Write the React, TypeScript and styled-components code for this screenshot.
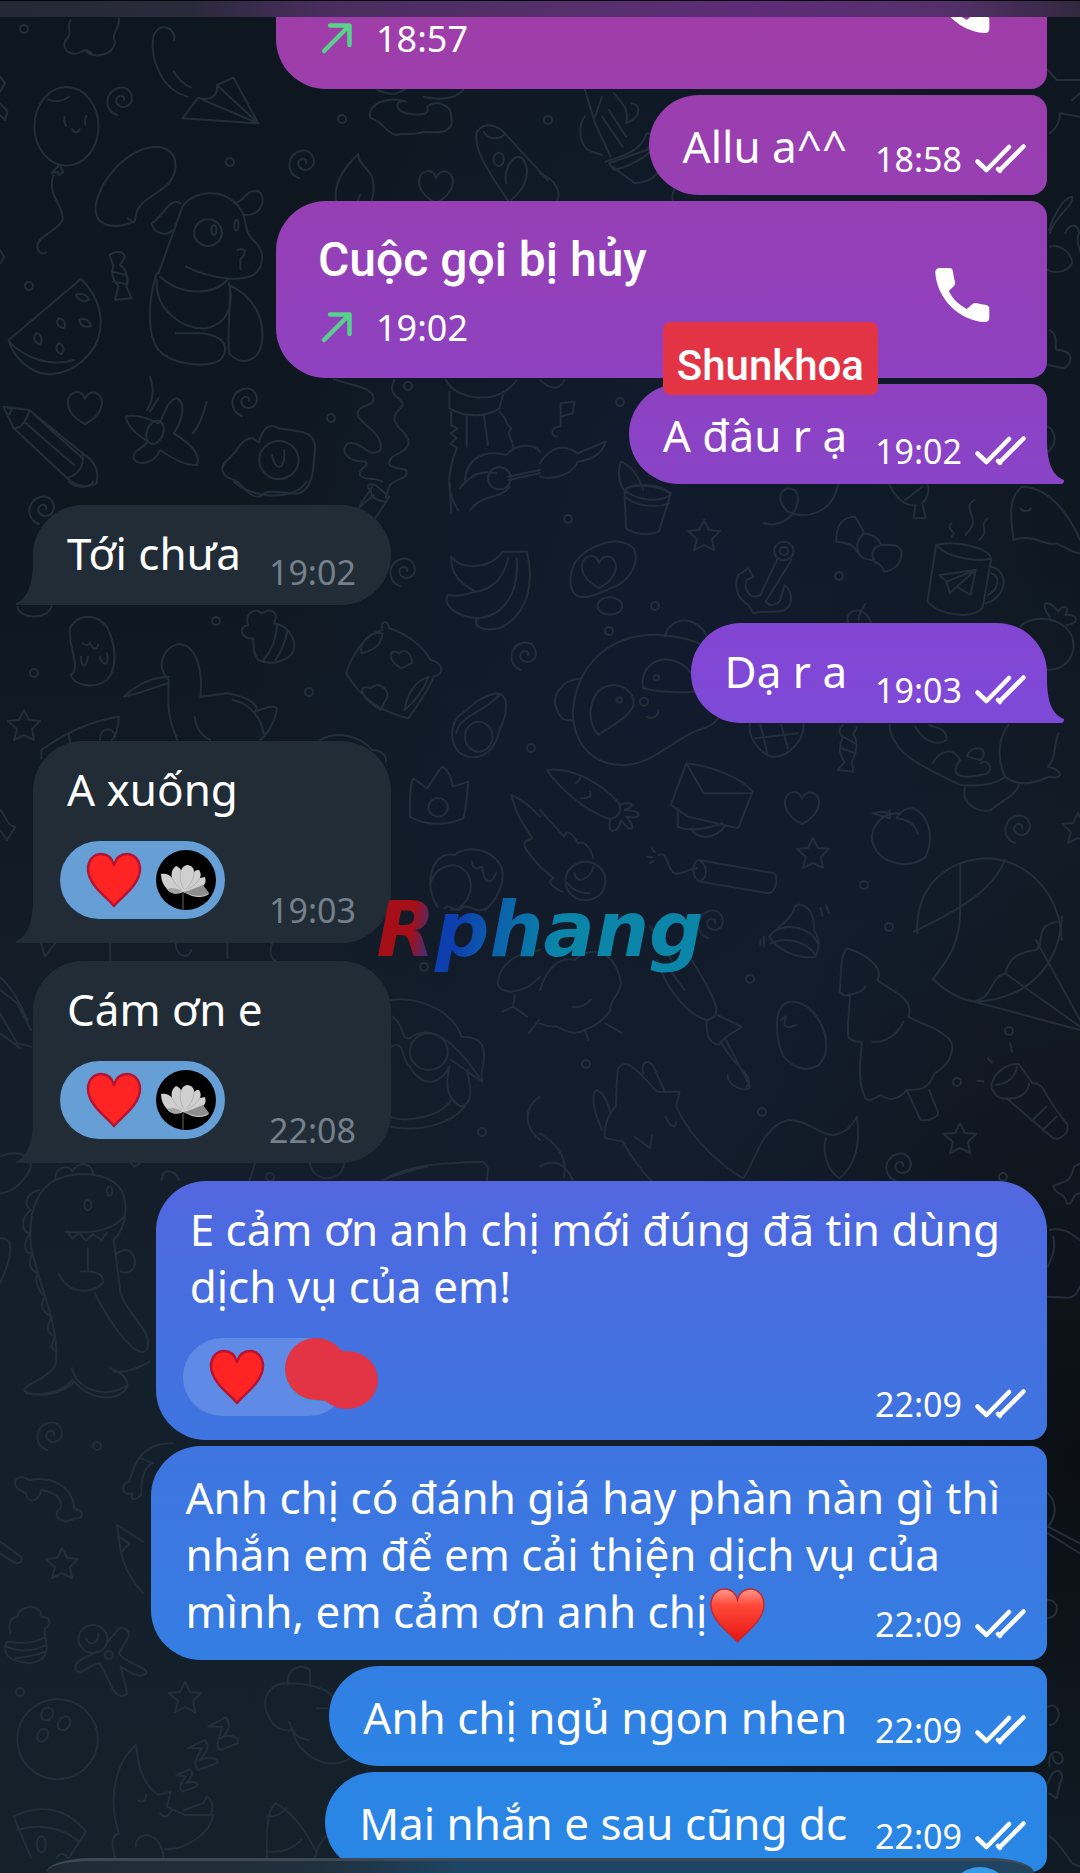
import React from "react";
import styled, { createGlobalStyle, css } from "styled-components";

const GlobalStyle = createGlobalStyle`
  * { box-sizing: border-box; }
  body { margin: 0; background: #111a25; }
`;

const textFont = `"Noto Sans", "Open Sans", sans-serif`;
const bubbleGradient = `linear-gradient(
  180deg,
  #a03da7 0%, #983fb2 9%, #8f41bf 19%, #8147d6 36%, #5a62df 60%,
  #4a6ce0 67%, #3f74e0 76%, #3a79e1 84%, #2c84e4 94%, #2887e6 100%
)`;

const Screen = styled.div`
  position: relative;
  height: 100vh;
  overflow: hidden;
  color: #fff;
  font-family: ${textFont};
  background:
    radial-gradient(ellipse at 62% 32%, #111b2e 0%, rgba(17, 27, 46, 0) 48%),
    radial-gradient(ellipse at 100% 78%, #0b0f14 0%, rgba(11, 15, 20, 0) 30%),
    linear-gradient(180deg, #0e171f 0%, #0f1820 30%, #141d29 58%, #13202b 78%, #14212b 100%);
`;

const Wallpaper = styled.svg`
  position: absolute;
  inset: 0;
  width: 100%;
  height: 100%;
  fill: none;
  stroke: #232e3a;
  stroke-width: 2px;
  stroke-linecap: round;
  stroke-linejoin: round;
  path, circle, ellipse { vector-effect: non-scaling-stroke; }
`;

const TopBar = styled.header`
  position: absolute;
  inset: 0 0 auto;
  z-index: 2;
  height: 17px;
  border-top: 1px solid #05070a;
  background: linear-gradient(90deg, #222a35 0%, #2b2a3c 18%, #4a2d5e 30%, #55306b 52%, #5e2c78 70%, #54306a 88%, #33283f 100%);
`;

const Composer = styled.footer`
  position: absolute;
  inset: auto 0 0;
  z-index: 2;
  display: flex;
  justify-content: flex-end;
  height: 15px;
  margin: 0 46px;
  padding: 6px 22px 0;
  overflow: hidden;
  border-top: 3px solid #3c4853;
  border-radius: 44px 44px 0 0 / 15px 15px 0 0;
  background: linear-gradient(90deg, #1f2a34 0%, #21303d 28%, #1d4565 42%, #1d4565 94%, #24425a 100%);
`;

const SendButton = styled.button`
  flex: none;
  width: 64px;
  height: 64px;
  padding: 0;
  border: 0;
  border-radius: 50%;
  background: #369be6;
`;

const Messages = styled.main`
  position: relative;
  z-index: 1;
  display: flex;
  flex-direction: column;
  justify-content: flex-end;
  gap: 6px;
  height: 100%;
  padding: 0 33px 1px;
`;

type BubbleProps = { $mine?: boolean; $first?: boolean; $last?: boolean };

const tail = css<BubbleProps>`
  &::after {
    content: "";
    position: absolute;
    bottom: 0;
    width: 17px;
    height: 44px;
    ${({ $mine }) =>
      $mine
        ? css`
            left: 100%;
            background: ${bubbleGradient} fixed;
            clip-path: path("M0 0 C0 24 6 36 17 40 Q17 44 14 44 L0 44 Z");
          `
        : css`
            right: 100%;
            background: #212c36;
            clip-path: path("M17 0 C17 24 11 38 0 42 L0 44 L17 44 Z");
          `}
  }
`;

const Bubble = styled.article<BubbleProps>`
  position: relative;
  flex: none;
  width: fit-content;
  max-width: 100%;
  align-self: ${({ $mine }) => ($mine ? "flex-end" : "flex-start")};
  margin-top: ${({ $first }) => ($first ? 12 : 0)}px;
  margin-bottom: ${({ $first, $last }) => ($last && !$first ? 3 : 0)}px;
  padding: ${({ $first }) => ($first ? "20px" : "23px")} ${({ $mine }) => ($mine ? 21 : 35)}px
    ${({ $first }) => ($first ? "23px" : "20px")} 34px;
  border-radius: ${({ $mine, $first, $last }) =>
    $mine
      ? `50px ${$first ? 50 : 16}px ${$last ? 0 : 16}px 50px`
      : "50px 50px 50px 0"};
  background: ${({ $mine }) => ($mine ? css`${bubbleGradient} fixed` : "#212c36")};
  ${({ $last }) => $last && tail}
`;

const Line = styled.div`
  display: flex;
  align-items: flex-end;
  justify-content: space-between;
  gap: 28px;
`;

const Text = styled.p<{ $inset?: boolean }>`
  margin: 0;
  padding-right: ${({ $inset }) => ($inset ? 26 : 0)}px;
  font-size: 44px;
  line-height: 57px;
  white-space: pre-line;
`;

const Meta = styled.div<{ $mine?: boolean; $drop: number }>`
  display: flex;
  align-items: center;
  gap: 13px;
  margin: 0 0 -${({ $drop }) => $drop}px;
  color: ${({ $mine }) => ($mine ? "#fff" : "#74808c")};
  font-size: 34px;
  line-height: 40px;
`;

const CheckIcon = styled.svg`
  display: block;
  width: 51px;
  height: 30px;
`;

const ReactionRow = styled.div`
  display: flex;
  align-items: flex-end;
  justify-content: space-between;
  gap: 44px;
  margin: 23px 0 1px -7px;
`;

const Reaction = styled.button<{ $mine?: boolean }>`
  position: relative;
  display: flex;
  align-items: center;
  gap: 14px;
  width: 165px;
  height: 78px;
  padding: 0 9px 0 26px;
  border: 0;
  border-radius: 39px;
  background: ${({ $mine }) => ($mine ? "#5f8ae5" : "#659fd5")};
`;

const Redaction = styled.svg`
  position: absolute;
  left: 101px;
  top: 0;
  width: 94px;
  height: 72px;
`;

const ReactionHeart = styled.svg`
  flex: none;
  width: 56px;
  height: 56px;
`;

const Avatar = styled.svg`
  flex: none;
  width: 60px;
  height: 60px;
`;

const InlineHeart = styled.svg`
  display: inline-block;
  width: 55px;
  height: 57px;
  margin: -4px 0 -4px 3px;
  vertical-align: -12px;
`;

const CallBubble = styled(Bubble)`
  display: flex;
  align-items: flex-end;
  justify-content: space-between;
  width: 771px;
  height: 177px;
  padding: 0 52px 26px 42px;
`;

const CallInfo = styled.div`
  display: grid;
  gap: 16px;
`;

const CallTitle = styled.h2`
  margin: 0;
  font: 500 48px/56px Roboto, "Noto Sans", sans-serif;
`;

const CallTime = styled.div`
  display: flex;
  align-items: center;
  gap: 23px;
  font-size: 36px;
  line-height: 48px;
`;

const ArrowIcon = styled.svg`
  width: 35px;
  height: 34px;
`;

const CallButton = styled.button`
  width: 66px;
  height: 66px;
  margin-bottom: 24px;
  padding: 0;
  border: 0;
  background: none;
  color: #fff;
  svg { display: block; width: 100%; height: 100%; fill: currentColor; }
`;

const NameTag = styled.span`
  position: absolute;
  left: 34px;
  top: -62px;
  z-index: 1;
  padding: 19px 14px 5px;
  border-radius: 8px;
  background: #e23445;
  font: 500 42px/49px Roboto, "Noto Sans", sans-serif;
`;

const Watermark = styled.div`
  position: absolute;
  left: 50%;
  top: 930px;
  z-index: 3;
  padding: 0 8px;
  transform: translate(-50%, -50%);
  font: italic 700 76px/90px "DejaVu Sans", sans-serif;
  color: transparent;
  background: linear-gradient(100deg, #a60f17 0%, #a60f17 14%, #0d3fae 23%, #0d3fae 27%, #0c62ab 38%, #0b86a8 56%, #0b86a8 100%);
  background-clip: text;
`;

function Checks() {
  return (
    <CheckIcon viewBox="0 0 51 30" fill="none" stroke="#fff" strokeWidth="4.500" strokeLinecap="round" strokeLinejoin="round" role="img" aria-label="Đã xem">
      <path d="M2.500 17.500 11.500 26 34 3" />
      <path d="M24.500 26.500 48.500 2.500M23 25l2 2" />
    </CheckIcon>
  );
}

function Stamp({ time, mine, drop }: { time: string; mine?: boolean; drop: number }) {
  return (
    <Meta $mine={mine} $drop={drop}>
      <time>{time}</time>
      {mine && <Checks />}
    </Meta>
  );
}

type Place = { mine?: boolean; first?: boolean; last?: boolean };

function ShortMessage({ text, time, tag, mine, first, last }: Place & { text: string; time: string; tag?: string }) {
  return (
    <Bubble $mine={mine} $first={first} $last={last}>
      {tag && <NameTag>{tag}</NameTag>}
      <Line>
        <Text>{text}</Text>
        <Stamp time={time} mine={mine} drop={(first ? 23 : 20) - (last ? 13 : 16)} />
      </Line>
    </Bubble>
  );
}

function Heart() {
  return (
    <ReactionHeart viewBox="0 0 56 56">
      <path
        d="M28 54C22 46 2 33 2 17 2 8 8 2 15 2c6 0 11 4 13 11C30 6 35 2 41 2c7 0 13 6 13 15C54 33 34 46 28 54Z"
        fill="#ff2424" stroke="#b41432" strokeWidth="2.500" strokeLinejoin="round"
      />
    </ReactionHeart>
  );
}

function LotusAvatar() {
  return (
    <Avatar viewBox="0 0 60 60">
      <circle cx="30" cy="30" r="30" fill="#000" />
      <path d="M27 43v17" stroke="#333" strokeWidth="2" />
      <path d="M5 24c5-1 9 1 11 4-1-5 0-9 4-12 3 1 5 3 5 5 1-4 4-6 7-6 4 1 6 3 6 7 2-2 3-2 5-2 2 3 2 5 1 8l5-1c1 4 1 6-2 9l6 8c-4 3-10 4-17 2l-9-4c-5 3-13 2-16-3-4-4-6-9-6-15Z" fill="#cfcfcf" />
      <path d="M27 42c6-1 12-4 20-7l6 8c-4 3-10 4-17 2Z" fill="#8d8d8d" />
      <path d="M11 39c4-2 9-1 15 2-4 4-12 3-15-2Z" fill="#a4a4a4" />
      <path d="M16 28c2 5 6 9 10 12M25 21c-2 7 0 13 3 18M38 22c0 7-4 13-8 17M44 28c-3 5-7 8-12 11" stroke="#b4b4b4" fill="none" />
    </Avatar>
  );
}

function ReactedMessage({ text, time, mine, first, last }: Place & { text: string; time: string }) {
  return (
    <Bubble $mine={mine} $first={first} $last={last}>
      <Text $inset={mine}>{text}</Text>
      <ReactionRow>
        <Reaction $mine={mine} type="button" aria-label="Tim">
          <Heart />
          {mine ? (
            <Redaction viewBox="0 0 94 72">
              <ellipse cx="32" cy="33" rx="31" ry="31" fill="#3d9bdc" />
              <circle cx="32" cy="31" r="31" fill="#e23445" />
              <path d="M50 6 60 14 50 30ZM32 62l10 1 4-14Z" fill="#e23445" />
              <ellipse cx="63" cy="42" rx="31" ry="29" fill="#e23445" />
            </Redaction>
          ) : (
            <LotusAvatar />
          )}
        </Reaction>
        <Stamp time={time} mine={mine} drop={last ? 11 : 8} />
      </ReactionRow>
    </Bubble>
  );
}

function CallCard({ title, time }: { title?: string; time: string }) {
  return (
    <CallBubble $mine>
      <CallInfo>
        {title && <CallTitle>{title}</CallTitle>}
        <CallTime>
          <ArrowIcon viewBox="-3 0 35 34" fill="none" stroke="#57d18b" strokeWidth="4.500" strokeLinecap="round" strokeLinejoin="round">
            <path d="M3 29 28 4M9 3.500H28.500V23" />
          </ArrowIcon>
          <time>{time}</time>
        </CallTime>
      </CallInfo>
      <CallButton type="button" aria-label="Gọi lại">
        <svg viewBox="1 1 22 22">
          <path d="M4.500 3h3.300c.7 0 1.100.4 1.200 1.100.1 1.200.3 2.400.7 3.500.1.500 0 .9-.3 1.300L7.600 10.700c1.400 2.700 3.300 4.600 6 6l1.900-1.700c.4-.3.800-.4 1.300-.3 1.100.3 2.200.5 3.300.6.6.1 1 .5 1 1.200v3.200c0 .8-.5 1.300-1.300 1.300C11 20.700 3.500 13 3.100 4.400 3.100 3.600 3.700 3 4.500 3Z" />
        </svg>
      </CallButton>
    </CallBubble>
  );
}

const star = "M0-15 5-5 16-4 8 4 10 15 0 10-10 15-7 4-16-4-5-5Z";
const heart = "M0 18C-12 12-18 3-17-5-15-16-3-17 0-7 5-18 17-14 17-3 16 7 8 14 0 18Z";
const spiral = "M-3 16C-16 12-16-7-2-11 10-14 16 0 9 6 2 11-6 5-3-1 0-5 5-3 4 1";

const stamps: Array<[string, number, number]> = [
  [spiral, 120, 99], [spiral, 302, 162], [spiral, 245, 400], [spiral, 42, 508], [spiral, 403, 570], [spiral, 524, 654],
  [spiral, 1018, 827], [spiral, 711, 922], [spiral, 899, 1165], [spiral, 50, 1434],
  [star, 24, 725], [star, 704, 535], [star, 813, 853], [star, 1078, 828], [star, 960, 1138], [star, 62, 1563], [star, 185, 1697],
  [heart, 436, 185], [heart, 85, 406], [heart, 802, 806], [heart, 599, 570],
];

const dots = [
  [24, 29], [342, 119], [230, 162], [29, 286], [548, 120], [408, 386], [331, 418], [620, 402], [568, 519], [655, 606],
  [839, 576], [609, 631], [216, 621], [34, 673], [309, 692], [531, 748], [864, 885], [889, 927], [750, 979], [1009, 1031],
  [957, 1082], [586, 1064], [762, 1112], [1003, 1177], [482, 1132], [424, 967], [97, 1446], [20, 1692], [270, 1177],
];

function Doodles() {
  return (
    <Wallpaper viewBox="0 0 1080 1873" preserveAspectRatio="xMidYMid slice" aria-hidden="true">
      {stamps.map(([d, x, y]) => (
        <path key={`${x}-${y}`} d={d} transform={`translate(${x} ${y})`} />
      ))}
      {dots.map(([x, y]) => (
        <circle key={`${x}-${y}`} cx={x} cy={y} r="4" />
      ))}
      <g transform="scale(.3444 .3333)">
        <path d="M205 60C190 85 215 100 190 120 175 155 215 175 245 150 275 180 330 165 334 125 320 100 350 85 345 55M250 150l15 8" />
        <path d="M505 120C515 85 460 60 445 110 435 180 470 270 545 290M505 215C520 240 535 255 555 262" />
        <path d="M750 370 530 355 575 293C605 305 635 290 630 255L678 233ZM750 370 590 300M750 370 635 260" />
        <ellipse cx="193" cy="379" rx="93" ry="118" />
        <path d="M140 298c20 10 45 5 60-8M187 350c-2 12 0 20 5 28M250 348c-4 8-4 18-2 26M210 388c6 12 16 12 21 0M170 498l-20 20 18-2 2 10 14-10-8-14M155 525C135 590 185 610 182 660 160 700 110 705 108 740c2 18 14 24 26 18" />
        <path d="M390 665C330 690 275 680 277 620 290 540 370 440 460 440 520 450 520 510 490 550 450 590 405 600 396 640L390 668 370 655" />
        <path d="M460 820 530 620C560 570 660 560 700 630 720 660 705 690 735 720 770 750 770 800 735 825 700 845 620 840 540 800M525 610C490 590 475 650 440 670 450 710 490 705 500 690M680 610C720 600 705 570 750 573 775 590 765 650 705 645" />
        <circle cx="604" cy="698" r="40" /><ellipse cx="621" cy="690" rx="7" ry="15" /><ellipse cx="686" cy="676" rx="6" ry="16" />
        <path d="M455 820C430 900 425 1000 460 1050 500 1095 600 1105 640 1080 670 1040 650 1010 590 1000H510M465 830C530 890 620 885 660 840M455 840C450 930 530 990 600 985 660 970 680 920 665 850M665 855C740 890 770 960 760 1030 750 1085 700 1100 665 1060 660 1000 668 940 668 860M690 750c20-8 30 5 8 28v30" />
        <path d="M318 765c20-15 40-10 45 5l-14 25c20 15 25 45 18 65l15 35-48 5 10-42c-20-20-20-45-15-60ZM325 815l42 10M328 845l42 8" />
        <path d="M25 1020 235 837C290 890 310 970 275 1040 230 1110 170 1130 120 1120 70 1105 35 1060 25 1020ZM25 1025C80 1080 150 1100 215 1080" />
        <path d="M220 885c15-8 35 0 38 15-18 8-32 0-38-15ZM170 955c15 0 25 20 15 30-18-4-24-18-15-30ZM230 960c15-8 30 0 34 18-18 6-30 0-34-18ZM170 1030c15 5 20 20 8 32-16-5-18-20-8-32ZM105 1000c15 0 20 20 12 32-18-2-22-20-12-32Z" />
        <path d="M1040 463C980 520 960 580 985 640 1060 670 1100 600 1080 530 1065 500 1040 490 1040 463ZM1045 585l-10 30" />
        <path d="M1180 305C1120 285 1065 315 1075 355 1110 360 1120 400 1150 405 1180 395 1200 410 1230 395 1270 400 1320 400 1310 355 1315 310 1260 300 1240 320 1250 350 1210 345 1180 340 1140 330 1150 295 1180 305ZM1095 270c50 20 60 10 85-5M1230 290c40 10 90 10 115-20" />
        <path d="M1480 610C1430 530 1370 450 1385 395 1410 360 1450 380 1470 405L1590 540M1405 395c15 30 50 20 60 8M1470 550c-10-50 30-100 50-70 25 40 0 90-35 120" /><ellipse cx="1448" cy="478" rx="15" ry="20" />
        <path d="M0 230l15 20-15 25M0 310l22 25-8 25L0 345M0 750l12 20-10 20" />
      </g>
      <g transform="translate(540 0) scale(.3444 .3333)">
        <path d="M130 268 160 370 205 470M130 350C110 370 110 440 150 455l30 10M190 485C230 470 290 460 310 400 340 400 320 440 310 450L200 490 215 510C260 500 310 470 325 450M210 500 275 550C320 545 350 530 350 480M215 280C240 310 260 330 250 370 300 350 290 310 265 310M180 290l-20 60M180 350l60 90M200 330l50 80" />
        <path d="M1475 210 1500 240 1568 240M1480 400C1510 380 1510 340 1510 340L1568 350M1545 300l23-20M1478 690C1490 650 1520 590 1545 590 1550 620 1500 640 1480 700M1480 740C1510 730 1545 760 1545 790 1530 820 1490 820 1475 810M1525 700c10-30 40-30 40 0-10 20 0 40 5 60M1480 990C1510 1010 1490 1040 1500 1050 1550 1050 1550 1090 1520 1105L1475 1095M1475 1280c30 20 20 60 0 75" />
        <path d="M0 520C50 540 60 580 50 600M385 600C380 560 410 545 440 560M0 1140C30 1170 60 1170 70 1140M50 1310C30 1310 30 1280 60 1280V1210L100 1205 95 1240 60 1250M0 1390C30 1340 70 1330 110 1360L190 1325C180 1370 140 1380 110 1385 90 1430 30 1440 0 1430M250 1480C220 1440 230 1400 235 1385 270 1400 290 1440 300 1470M250 1465C280 1450 350 1450 380 1480" />
      </g>
      <g transform="translate(0 370) scale(.3444 .3333)">
        <path d="M10 110 85 120 240 250C270 270 290 300 280 340 255 355 220 350 195 325L40 175ZM40 175C65 175 75 150 85 125M70 155 215 285M100 135 240 265M195 325C230 310 245 290 240 250M15 110l20 8-8 15" />
        <path d="M365 140C400 130 440 150 460 160 475 150 480 90 515 85 540 100 530 150 505 190 550 220 585 250 572 285 530 290 480 250 465 240 450 280 400 290 388 265 385 240 410 240 430 215 390 190 370 165 365 140ZM435 20c15 40 10 70-8 100M460 85 435 125M600 95C590 140 575 170 560 190" /><ellipse cx="450" cy="187" rx="24" ry="36" transform="rotate(20 450 187)" />
        <path d="M752 218C760 180 780 155 810 175 870 185 910 180 915 230 910 300 910 350 870 370 820 375 780 350 755 380 720 385 700 335 680 330 640 320 640 290 655 275 690 250 700 200 735 205ZM790 255c8 50 40 50 35-15" /><circle cx="810" cy="270" r="57" />
        <path d="M970 28C1030 50 1080 50 1085 85 1085 115 1030 100 1040 140 1070 180 1110 190 1105 240 1070 270 1050 210 1010 220 985 245 1010 275 1060 275 1080 290 1040 290 1045 315 1060 335 1090 320 1110 335M1145 30C1120 80 1170 80 1170 105 1150 130 1130 140 1160 175 1210 220 1180 240 1140 260 1110 290 1150 295 1180 300 1190 330 1140 325 1130 350L1120 385M1080 350c-10 20 0 40 40 45M1085 375 1040 415" />
        <path d="M1295 30C1320 90 1450 110 1500 30M1305 65v50c50 30 110 25 145 0l10-40M1310 125v40l18 10-20 15 18 15-18 15 18 15C1290 330 1305 380 1330 420M1355 135v95M1405 135l12 90M1450 125c30 30 10 30 35 50-20 20 10 40 5 60M1350 330C1355 260 1410 240 1470 255 1500 220 1550 220 1568 245M1335 355C1370 310 1400 300 1440 310M1475 320 1568 300M1475 330 1568 310M1365 420C1400 370 1450 390 1480 350" /><circle cx="1450" cy="325" r="33" />
      </g>
      <g transform="translate(0 480) scale(.3444 .3333)">
        <path d="M1310 230C1340 270 1420 270 1460 215H1530C1550 300 1540 400 1450 445 1390 455 1375 435 1385 415 1330 410 1285 380 1300 345 1330 350 1350 345 1380 335 1320 300 1310 270 1310 230ZM1380 335C1430 330 1465 290 1475 235M1385 415C1460 410 1510 340 1500 235" />
        <path d="M205 585C240 570 190 480 205 440 230 400 280 400 310 440 340 500 340 570 310 600 270 630 215 615 205 585ZM240 490c10 10 20 5 22-3M265 495c5 15 15 15 20 0M235 530c0 30 15 40 20 0M290 530c5 30 30 30 20-10" />
        <path d="M515 780C480 700 490 650 490 600 450 560 475 500 520 492 570 495 590 570 582 650L660 640C720 650 760 680 740 695 760 690 790 670 805 685 800 720 780 760 755 780M490 590C440 590 390 620 360 650 410 640 450 620 490 610M565 710C570 750 590 770 610 780M675 660C730 670 760 720 765 760" />
        <path d="M735 475C700 480 690 440 720 435 710 400 740 380 760 400 790 380 810 400 795 430 850 440 870 500 840 530 810 550 780 555 750 540 730 510 740 500 735 475ZM765 540C790 510 800 480 805 435M800 540C820 510 830 480 835 450" />
        <path d="M1005 580C1020 530 1060 460 1110 450 1100 420 1130 420 1130 445 1180 460 1230 500 1250 540 1290 550 1290 580 1260 590 1240 640 1210 680 1185 715 1120 700 1050 660 1005 580ZM1165 565C1120 540 1130 500 1160 520 1180 500 1200 530 1195 550ZM1105 690C1040 650 1040 610 1075 625 1100 600 1130 630 1125 650ZM1175 690C1180 640 1210 600 1245 590 1230 630 1210 660 1175 690ZM1050 520C1040 490 1080 450 1110 460 1110 490 1090 510 1050 520Z" />
        <path d="M1440 640C1480 640 1475 700 1450 750 1440 810 1400 840 1360 830 1310 820 1300 750 1330 710 1370 680 1390 650 1440 640ZM1450 645C1400 700 1330 710 1325 760" /><ellipse cx="1390" cy="770" rx="40" ry="45" />
        <path d="M120 810C200 750 280 720 345 710 345 750 330 775 325 780M120 810v25M200 765l5 30M290 780c0-40 40-40 45-10" />
        <path d="M1190 1010C1190 960 1190 910 1200 895L1240 925C1260 900 1270 870 1285 860 1300 870 1310 890 1315 920L1360 905C1355 950 1355 980 1345 1015 1290 1040 1230 1035 1190 1010Z" /><circle cx="1272" cy="982" r="28" />
        <path d="M930 780C980 750 1050 770 1080 810 1110 810 1125 830 1120 845M1485 945C1520 960 1550 990 1568 1010M1485 945C1500 1020 1540 1060 1545 1075 1500 1090 1530 1110 1568 1160M0 990C20 1010 20 1040 45 1040L20 1080 0 1050" />
        <path d="M1270 1280C1230 1220 1250 1110 1320 1125 1360 1090 1450 1110 1460 1180 1460 1220 1440 1260 1410 1290M1370 1145c5 30 20 20 30 15 5 60 30 50 40 20M1290 1285c20-20 30 20 50 0s40 20 70 0M1250 1210C1270 1140 1350 1140 1365 1200 1375 1250 1340 1290 1310 1290M680 5C720 50 850 70 890 5M200 5c20 20 60 20 70 0M1310 100l-5-90M1045 75 1075 30C1060 15 1070 10 1090 15L1130 50 1090 115" />
        <path d="M50 380C60 420 140 420 150 378" />
      </g>
      <g transform="translate(540 480) scale(.3444 .3333)">
        <path d="M245 30C270 10 340 15 380 40L345 155C310 170 270 160 250 145ZM245 30C280 60 340 70 380 45M248 50C280 80 340 85 375 70" />
        <path d="M140 350C90 360 75 310 100 250 140 190 240 160 275 210 290 260 250 310 205 325 185 335 160 345 140 350Z" /><ellipse cx="203" cy="378" rx="36" ry="26" />
        <path d="M650 130C720 150 770 70 740 30 700 10 680 60 720 95 770 120 850 100 865 15M860 185C860 130 880 110 915 110 925 130 940 150 940 160 980 165 990 190 990 195 1020 195 1040 190 1050 215 1050 250 1030 270 1000 275 985 240 960 240 940 235 910 220 930 190 860 185ZM940 160c-30 30-20 60 0 75M990 195c-30 10-30 30-15 55" />
        <path d="M690 235 640 345C610 360 590 330 600 300L620 290 605 265 575 285C560 330 580 360 605 375L620 400C650 390 690 400 710 390 740 370 730 330 710 315L700 350C700 370 670 385 655 365L730 240" /><circle cx="708" cy="213" r="28" /><circle cx="708" cy="213" r="12" />
        <path d="M1150 195C1200 180 1300 200 1310 235L1285 385C1250 420 1160 405 1125 365ZM1150 195C1190 240 1280 245 1310 235M1310 260C1360 270 1360 350 1295 370M1310 280C1340 290 1330 330 1300 345M1160 285 1265 270 1250 345 1210 320 1190 340 1180 305ZM1180 305 1265 270 1210 320M1195 130c-20 20 20 25 0 40M1260 60C1220 90 1290 110 1235 165M1300 115C1270 140 1310 150 1275 180" />
        <path d="M1375 180C1365 110 1360 50 1400 20 1470 20 1530 90 1568 180M1375 180C1430 160 1470 200 1500 190 1530 205 1550 220 1568 220M1395 85c8 12 25 10 30 0M1015 15C1030 50 1060 80 1090 75L1085 115H1120L1110 70C1130 50 1130 20 1125 15M1060 60l50-40" />
        <path d="M485 470C460 410 380 400 362 470M485 500C400 460 300 450 220 490 160 520 100 590 95 700 100 800 160 860 250 855 330 850 400 770 460 750 500 740 515 720 520 710M120 595C60 600 30 650 50 690 60 720 80 725 92 720M300 625C290 570 330 530 380 540 430 550 460 600 445 635 400 640 340 635 300 625ZM170 765C130 720 145 640 190 620 240 605 280 640 270 680 250 720 200 740 170 765ZM310 710c15 10 35 0 33-20" /><circle cx="230" cy="660" r="8" /><circle cx="338" cy="593" r="8" /><circle cx="302" cy="665" r="12" />
        <path d="M1395 440C1430 400 1520 410 1545 470 1560 520 1530 570 1475 570M1480 410C1450 370 1470 350 1505 395 1520 370 1540 380 1525 405 1560 400 1570 430 1530 435M895 430C880 390 940 370 960 425M925 420C925 400 935 390 945 370" />
        <path d="M610 730C600 780 650 830 680 830 720 830 770 780 765 730M640 735l20 85M700 735l20 70M625 775 750 760M880 735C860 750 875 770 880 770 865 800 870 830 885 845L865 870 910 875 905 845C920 820 925 780 910 765L920 740M880 770l35 20M875 805l40 15" />
        <path d="M20 870C90 860 180 910 230 970 240 1000 220 1020 195 1015 130 990 60 930 20 870ZM230 975C270 960 280 980 245 990 300 990 300 1020 250 1010 280 1040 270 1070 235 1020 230 1060 190 1070 205 1015M105 910l12-15M120 955c30 0 30-10 25-20" />
        <path d="M425 850C500 860 580 890 618 935L575 1045 430 1010 380 975ZM425 850 475 940H615M400 985V1040C440 1060 500 1040 530 1030M440 1045C450 1080 510 1080 540 1035" />
        <path d="M1015 735C1020 820 1110 860 1220 915 1290 920 1330 910 1350 890M1235 920C1220 970 1270 1000 1310 990 1340 960 1380 950 1390 915M1350 890C1320 820 1340 760 1360 735M1350 890C1400 930 1450 900 1480 890 1520 900 1520 870 1475 860 1500 830 1490 800 1505 760M1090 740C1110 780 1150 800 1180 780 1180 740 1150 745 1130 735M1140 850C1160 810 1200 800 1220 840 1190 880 1210 900 1280 885 1330 880 1300 830 1280 850M1240 830C1250 790 1310 800 1280 840Z" />
        <path d="M1040 1000C980 1000 950 1060 970 1100 1000 1160 1080 1165 1120 1130 1150 1060 1120 1000 1085 985 1050 985 1045 1000 1035 1015 1080 1020 1090 1040 1098 1062M965 1000 1015 1015 1015 990M970 1000C1000 990 1020 1000 1015 1015" />
        <path d="M345 1125C370 1110 370 1170 390 1180 420 1185 430 1165 455 1165M460 1140C440 1150 440 1195 465 1205L665 1240C690 1230 690 1190 680 1180ZM460 1140c25 10 30 50 5 65M325 1105l8 12M310 1130l15 2M320 1150l10-8" />
        <circle cx="132" cy="1203" r="58" /><path d="M100 1180c10 40 50 10 55-20M80 1210C100 1240 140 1240 145 1240M0 990 70 1070C80 1040 100 1070 110 1090 130 1080 150 1110 155 1135M0 1160 40 1195C20 1200 30 1220 65 1235M815 1285l5 22M830 1275l8 24" />
        <path d="M1095 1360C1090 1220 1180 1135 1310 1135 1430 1150 1510 1250 1515 1380M1220 1150V1290C1220 1400 1180 1440 1140 1500M1350 1140C1320 1220 1240 1280 1085 1355M1140 1495C1170 1530 1220 1560 1260 1565 1420 1560 1510 1450 1515 1310M1260 1565C1320 1550 1300 1500 1350 1480 1360 1460 1360 1420 1440 1410 1470 1390 1430 1340 1500 1325M1260 1565 1568 1650M1350 1480 1568 1640M1440 1380 1568 1620" />
      </g>
      <g transform="translate(0 900) scale(.3444 .3333)">
        <path d="M1135 300C1200 290 1310 320 1340 410 1390 410 1410 430 1405 480 1400 530 1395 510 1400 545L1310 480M1140 350C1180 380 1160 420 1190 415 1230 380 1300 390 1390 530M1135 440C1180 420 1160 470 1190 500 1230 570 1280 550 1305 500C1290 560 1300 600 1340 620 1390 600 1350 520 1360 510M1130 650C1180 670 1280 650 1310 600M1135 680C1220 700 1310 670 1350 620" /><circle cx="1245" cy="455" r="55" />
        <path d="M1445 250C1450 190 1500 160 1568 150M1445 250C1450 285 1520 285 1568 230M1495 285 1490 320 1460 335M1490 320 1530 350M1568 590C1520 620 1520 680 1568 720M1535 400l30-40M1120 835C1200 790 1300 790 1400 785 1430 800 1410 830 1415 840M900 790C910 850 990 850 1000 790M1110 840c60-20 110-40 130-40M120 130l10 40 30-40M320 130v50M510 130c0 40 40 50 45 20M660 130v45M790 130c-10 30 0 50 10 52" />
        <path d="M0 270 50 310 90 390M0 340 50 430 90 440M0 400l60 45M0 230C30 260 60 310 80 360" />
        <path d="M330 1020C370 980 375 900 345 860 310 820 230 810 160 840 110 870 80 930 90 1040 110 1150 180 1290 160 1400 130 1440 80 1450 70 1470 80 1490 170 1490 210 1440M190 995C240 1000 320 1000 360 950M195 995l15 20 20-15 20 22 20-20 25 18 15-22M330 1020 350 1180C380 1260 450 1300 425 1350 400 1380 330 1290 275 1180M170 1120C200 1190 280 1180 300 1145 300 1120 270 1110 235 1115M255 1045V1110M340 1060C380 1030 400 1080 390 1100 380 1120 360 1120 350 1115M210 1405C220 1470 310 1500 370 1455 370 1430 340 1410 320 1405M330 1415C370 1420 410 1400 435 1385" />
        <path d="M115 870C70 880 70 920 90 930 60 950 60 1000 88 1000 65 1030 70 1060 92 1060 80 1100 90 1110 110 1120 95 1150 120 1180 130 1190 110 1220 130 1240 150 1250 130 1290 140 1300 160 1310 145 1340 150 1350 165 1355M160 840C160 800 200 790 210 815 230 780 270 790 270 825" /><ellipse cx="255" cy="915" rx="10" ry="15" /><ellipse cx="318" cy="873" rx="8" ry="14" />
        <path d="M0 1015C40 1010 40 1060 0 1150M470 840C470 800 510 810 520 840M380 790l10 10 15-10M725 840l15-50M0 770C40 750 90 760 90 800 70 850 30 880 0 880" />
      </g>
      <g transform="translate(540 900) scale(.3444 .3333)">
        <path d="M665 110C700 70 730 60 740 20 760 0 800 30 795 90 810 110 815 140 800 170 750 180 690 150 665 110ZM665 110C700 60 790 80 805 130M670 130C710 110 770 120 800 165M650 110v30M640 120v15M815 25l5 22M830 15l8 24" />
        <path d="M890 145C870 170 875 230 870 275 880 290 895 290 900 280 900 330 890 370 895 410 910 430 930 425 935 425 930 480 920 540 945 595 960 610 975 590 990 585 1020 610 1050 590 1065 570 1100 570 1130 570 1145 520 1200 490 1210 430 1180 410 1150 380 1100 370 1070 350 1090 290 1010 270 980 240 1000 200 940 160 890 145ZM895 285C930 280 940 270 945 260M965 425C1020 430 1050 380 1055 365M1065 570 1105 660C1130 665 1160 650 1155 635L1130 570" />
        <path d="M690 350C700 290 750 300 780 325 830 370 850 450 810 495 770 520 730 500 705 465 690 430 685 390 690 350ZM700 360C720 340 710 350 710 375 720 390 735 375 745 375" />
        <path d="M1310 555C1320 520 1350 490 1390 492L1430 550C1470 550 1460 590 1530 670 1540 700 1510 720 1490 715L1355 595C1330 600 1315 580 1310 555ZM1325 555C1360 550 1380 530 1385 500M1355 595C1400 600 1420 570 1420 550M1430 660 1470 620M1460 690 1500 650M1300 475l12 12M1270 542l18 2M1365 430l6 25" />
        <path d="M340 180C370 280 440 350 485 360 530 350 520 310 440 180M370 200 420 270M320 80 400 210M485 360C480 400 490 430 520 435 540 400 580 390 585 380L515 345M540 420C570 480 590 520 610 560 600 580 545 560 545 525M525 425C560 500 630 530 600 560" />
        <path d="M190 715C180 690 200 640 220 620L225 510C240 480 260 490 290 520L340 575H405L395 620C440 720 530 800 590 835 620 800 640 680 720 660 780 660 810 705 850 705 890 700 910 670 920 650 930 720 920 790 870 835 830 810 820 750 830 715M190 715 240 725C270 780 310 830 325 842M180 690C150 620 150 580 165 570 190 580 200 620 205 640M300 520C290 480 320 480 330 500L360 570M275 710l45 35 5-40M365 650c10 30 30 40 30 15" />
        <path d="M0 270C20 200 60 170 100 180 160 130 220 160 235 250 230 290 200 300 205 330 180 370 150 380 130 390 100 410 70 390 50 380 20 380 0 370 0 370M95 320C120 325 140 310 148 298M190 370l45 28M130 390l10 30" />
        <path d="M1480 990C1530 980 1550 1010 1568 1020M1490 1010C1500 1060 1480 1080 1475 1100M1475 1190C1520 1190 1550 1210 1568 1160M1490 860C1510 840 1540 860 1550 800L1568 790M1490 860C1500 890 1520 870 1530 910 1550 920 1540 880 1568 880M0 700C50 730 80 770 70 830M0 800C30 780 70 780 95 840" />
      </g>
      <g transform="translate(0 1380) scale(.3444 .3333)">
        <path d="M75 40C130 50 180 40 215 5 260 60 340 70 370 20M50 325C30 300 60 280 85 300 140 290 210 310 215 385 250 395 240 420 215 415 200 430 160 425 165 395 190 380 180 340 120 330 110 370 80 370 75 340Z" />
        <path d="M440 250C410 270 410 320 410 345 380 370 380 350 385 340 350 350 350 310 375 305 390 250 410 190 500 190M410 235 445 250M340 435 415 485M340 435C350 520 350 560 415 640M345 470l30 20-20 25" />
        <path d="M20 785C60 790 110 790 130 770 145 820 130 845 85 850 40 845 0 830 20 785ZM30 760C20 720 40 710 50 710 60 670 120 670 120 710 150 710 150 740 130 745L130 770M20 800C60 820 110 810 132 795M45 835C90 830 120 820 132 815" />
        <path d="M310 790 345 745C370 740 380 760 370 775L345 820C360 850 430 860 425 880 400 900 370 870 350 860L370 940C350 960 330 940 320 910L290 850C260 850 240 890 220 870 210 840 260 830 280 815M250 775c10 30 40 10 35-15" /><circle cx="270" cy="777" r="42" /><circle cx="316" cy="825" r="12" />
        <ellipse cx="167" cy="1078" rx="117" ry="120" /><ellipse cx="137" cy="1002" rx="17" ry="20" transform="rotate(30 137 1002)" /><ellipse cx="186" cy="1030" rx="17" ry="22" transform="rotate(30 186 1030)" /><ellipse cx="124" cy="1066" rx="15" ry="20" transform="rotate(30 124 1066)" />
        <path d="M395 1095C340 1140 310 1250 345 1360 320 1370 325 1400 335 1434M395 1095C400 1150 410 1210 460 1245L495 1235 485 1280 535 1305H620C610 1360 540 1410 480 1408M395 1400C390 1350 470 1350 475 1434M400 1262C420 1270 425 1255 425 1245M465 1300C480 1320 490 1305 500 1290M535 1290 590 1270 600 1250C620 1260 620 1290 612 1300" />
        <path d="M605 1040 655 1012C680 1040 650 1070 640 1075 660 1060 700 1070 690 1090L640 1110C620 1100 640 1070 645 1040ZM545 1105 595 1080C615 1100 590 1130 580 1140 610 1125 640 1140 630 1150L575 1170C555 1150 580 1120 585 1105ZM512 1185 550 1168C570 1180 545 1205 540 1210 570 1200 580 1215 570 1220L530 1235C515 1220 530 1205 540 1190Z" />
        <path d="M965 950C950 920 880 910 835 910 780 910 750 960 785 1020 800 1050 840 1055 850 1050 860 1120 950 1180 1015 1135M835 915C830 860 880 850 900 870V920M840 1025c10 40 30 50 55 55M920 985h30" />
        <path d="M40 1310C110 1270 190 1280 250 1355L200 1434M40 1310 90 1434M50 1350C110 1330 180 1340 230 1385M165 1434c10-20 30-10 30 0" /><ellipse cx="120" cy="1393" rx="13" ry="24" />
        <path d="M775 1434C775 1370 770 1300 800 1270 840 1290 890 1350 920 1420M775 1310C800 1310 820 1300 830 1285M780 1415C820 1420 850 1405 875 1380M915 1434C920 1400 930 1390 945 1370M0 485 60 530C70 545 55 550 45 550L0 520" />
      </g>
      <g transform="translate(540 1380) scale(.3444 .3333)">
        <path d="M1475 340C1510 380 1490 420 1475 440L1568 490M1475 460 1568 520M1475 660C1510 660 1510 710 1475 715M1475 980C1510 960 1520 1030 1480 1035M1480 1160C1470 1100 1520 1110 1518 1140 1510 1160 1490 1150 1490 1130M1475 1210C1490 1150 1530 1170 1510 1210L1500 1255 1478 1240M1480 1370C1510 1390 1530 1430 1545 1450L1568 1460" />
      </g>
    </Wallpaper>
  );
}

export default function App() {
  return (
    <Screen>
      <GlobalStyle />
      <Doodles />
      <TopBar />
      <Messages>
        <CallCard time="18:57" />
        <ShortMessage mine text="Allu a^^" time="18:58" />
        <CallCard title="Cuộc gọi bị hủy" time="19:02" />
        <ShortMessage mine last text="A đâu r ạ" time="19:02" tag="Shunkhoa" />
        <ShortMessage first last text="Tới chưa" time="19:02" />
        <ShortMessage mine first last text="Dạ r a" time="19:03" />
        <ReactedMessage first last text="A xuống" time="19:03" />
        <ReactedMessage first last text="Cám ơn e" time="22:08" />
        <ReactedMessage mine first text={"E cảm ơn anh chị mới đúng đã tin dùng\ndịch vụ của em!"} time="22:09" />
        <Bubble $mine>
          <Text $inset>{"Anh chị có đánh giá hay phàn nàn gì thì\nnhắn em để em cải thiện dịch vụ của"}</Text>
          <Line>
            <Text>
              mình, em cảm ơn anh chị
              <InlineHeart viewBox="0 0 56 58" role="img" aria-label="❤️">
                <defs>
                  <linearGradient id="gloss" x1="0" y1="0" x2="0" y2="1">
                    <stop offset="0" stopColor="#ff9a8c" />
                    <stop offset=".3" stopColor="#ff4a3a" />
                    <stop offset="1" stopColor="#e81410" />
                  </linearGradient>
                </defs>
                <path d="M28 56C22 48 1 35 1 18 1 9 7 2 15 2c6 0 11 4 13 11C30 6 35 2 41 2c8 0 14 7 14 16C55 35 34 48 28 56Z" fill="url(#gloss)" stroke="#c02a30" strokeWidth="1.500" />
              </InlineHeart>
            </Text>
            <Stamp mine time="22:09" drop={4} />
          </Line>
        </Bubble>
        <ShortMessage mine text="Anh chị ngủ ngon nhen" time="22:09" />
        <ShortMessage mine text="Mai nhắn e sau cũng dc" time="22:09" />
      </Messages>
      <Watermark>Rphang</Watermark>
      <Composer>
        <SendButton type="button" aria-label="Gửi" />
      </Composer>
    </Screen>
  );
}
